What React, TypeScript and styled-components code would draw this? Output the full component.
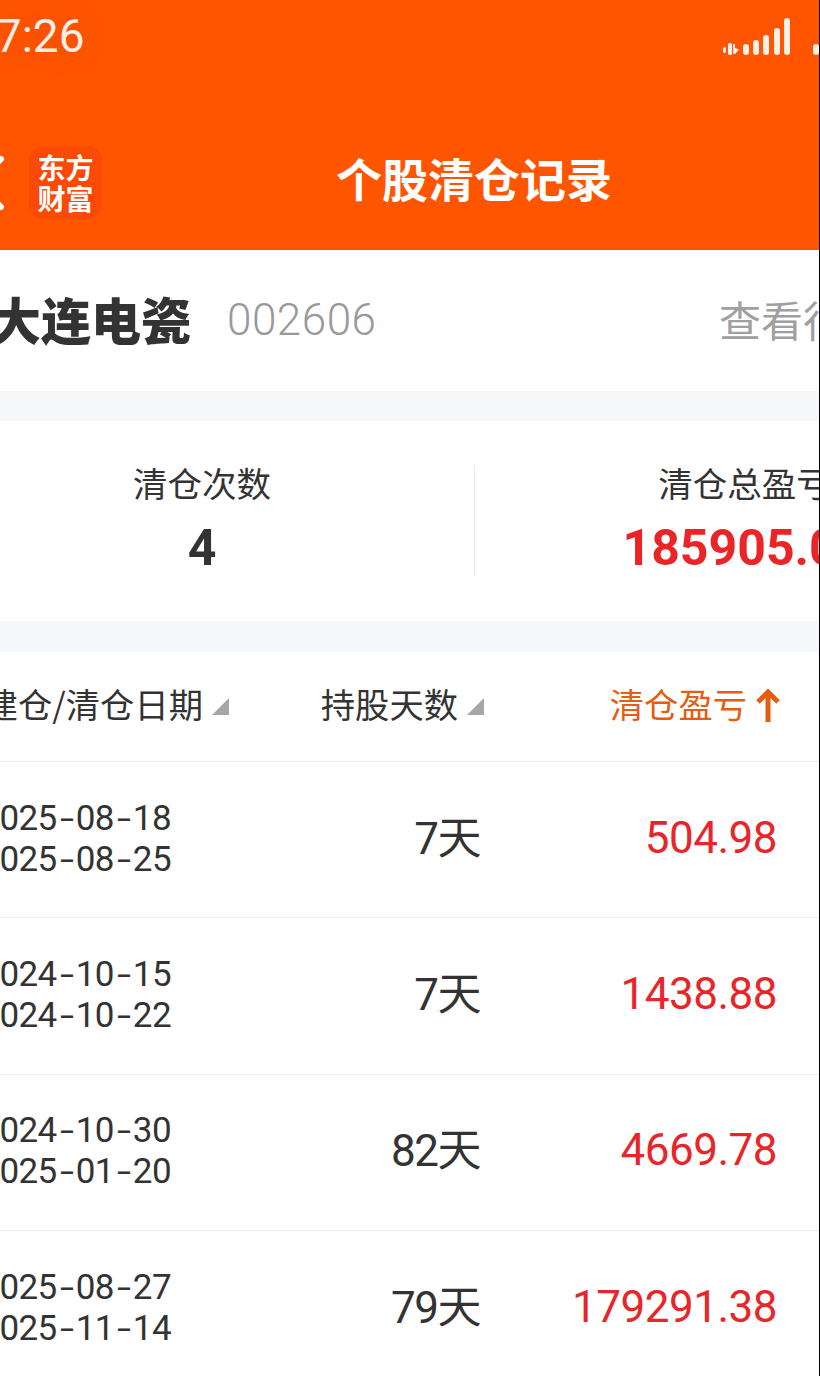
import React from "react";
import styled, { createGlobalStyle } from "styled-components";

const Global = createGlobalStyle`
  html, body { margin: 0; padding: 0; background: #fff; }
  body { font-family: Roboto, "Noto Sans CJK SC", sans-serif; }
`;
const Screen = styled.div`
  width: 819px; height: 1376px; overflow: hidden; background: #fff;
  border-right: 1px solid #000;
`;
const Page = styled.div`
  width: 1100px; margin-left: -30px;
`;
const Header = styled.header`
  height: 250px; box-sizing: border-box; background: #ff5500; display: flex; flex-direction: column;
`;
const StatusBar = styled.div`
  height: 146px; display: flex; justify-content: space-between; color: #ffeee4;
`;
const Clock = styled.div`
  font: 400 46px/48px Roboto, sans-serif; padding: 12px 0 0 0; text-shadow: 0 0 26px rgba(190, 70, 0, 0.45);
`;
const StatusIcons = styled.div`
  width: 350px; padding-top: 18px;
`;
const NavBar = styled.div`
  display: flex; align-items: flex-start; height: 104px;
`;
const Back = styled.svg`
  width: 50px; height: 72px; flex: none;
`;
const Logo = styled.div`
  width: 73px; height: 73px; flex: none; margin-left: 9px; border-radius: 14px; background: #fa4a05;
  color: #fff; font: 700 28px/31px "Noto Sans CJK SC", sans-serif; text-align: center;
  display: flex; align-items: center; justify-content: center;
`;
const NavTitle = styled.div`
  margin-left: 234px; color: #fff; font: 700 46px/62px "Noto Sans CJK SC", sans-serif; white-space: nowrap;
`;
const NameRow = styled.section`
  height: 141px; display: flex; align-items: center;
`;
const StockName = styled.div`
  margin: 0 0 6px 21px; font: 900 50px/64px "Noto Sans CJK SC", sans-serif; color: #333; width: 199px; white-space: nowrap;
`;
const StockCode = styled.div`
  margin: 0 0 2px 37px; font: 300 44px/64px Roboto, sans-serif; letter-spacing: 0.5px; color: #999; width: 492px;
`;
const More = styled.div`
  margin-bottom: 4px; font: 400 42px/64px "Noto Sans CJK SC", sans-serif; color: #a0a0a0; white-space: nowrap;
`;
const Gap = styled.div<{ $h: number }>`
  height: ${(p) => p.$h}px; background: #f6f7f9;
`;
const Stats = styled.section`
  height: 200px; display: grid; grid-template-columns: 504px 540px; align-items: center;
`;
const Stat = styled.div<{ $divider?: boolean }>`
  height: 112px; box-sizing: border-box; display: flex; flex-direction: column; align-items: center;
  ${(p) => (p.$divider ? "border-left: 1px solid #ececec;" : "padding-right: 40px;")}
`;
const StatLabel = styled.div`
  font: 400 34.5px/34px "Noto Sans CJK SC", sans-serif; color: #333; margin-bottom: 20px;
`;
const StatValue = styled.div<{ $red?: boolean }>`
  font: 700 50px/58px Roboto, sans-serif; color: ${(p) => (p.$red ? "#ea2427" : "#333")};
`;
const TableRow = styled.div<{ $head?: boolean }>`
  display: grid; grid-template-columns: 515px 292px; box-sizing: border-box;
  height: ${(p) => (p.$head ? 110 : 156.3)}px; padding-bottom: ${(p) => (p.$head ? 8 : 0)}px;
  border-bottom: 1px solid #ececec; align-items: center;
`;
const HeadLeft = styled.div`
  display: flex; align-items: center;
`;
const HeadCell = styled.div<{ $w: number }>`
  width: ${(p) => p.$w}px; box-sizing: border-box; display: flex; align-items: center; justify-content: flex-end;
  font: 400 34.3px/44px "Noto Sans CJK SC", sans-serif; color: #333; white-space: nowrap;
`;
const SortTri = styled.span`
  width: 0; height: 0; margin-left: 9px; margin-top: 8px; flex: none;
  border-style: solid; border-width: 0 0 17px 17px; border-color: transparent transparent #a6a6a6 transparent;
`;
const ActiveHead = styled.div`
  display: flex; align-items: center; justify-content: flex-end; margin-right: -4px;
  font: 400 34.3px/44px "Noto Sans CJK SC", sans-serif; color: #e45d10;
`;
const Arrow = styled.svg`
  width: 26px; height: 34px; margin-left: 8px; margin-top: 4px; flex: none;
`;
const LeftCells = styled.div`
  display: flex; align-items: center;
`;
const Dates = styled.div`
  width: 201px; margin-bottom: 2px; text-align: right; white-space: nowrap;
  font: 400 35px/41px Roboto, sans-serif; letter-spacing: -0.6px; color: #333;
`;
const Dash = styled.span`
  display: inline-block; width: 19px; text-align: center; transform: scaleX(1.45);
`;
const Days = styled.div`
  width: 309px; margin-bottom: 2px; text-align: right; letter-spacing: -1.5px;
  font: 400 44px/56px Roboto, "Noto Sans CJK SC", sans-serif; color: #333;
`;
const Profit = styled.div`
  margin-bottom: 4px; text-align: right; letter-spacing: -0.5px;
  font: 400 44px/56px Roboto, sans-serif; color: #e8262a;
`;

const rows = [
  ["2025-08-18", "2025-08-25", "7天", "504.98"],
  ["2024-10-15", "2024-10-22", "7天", "1438.88"],
  ["2024-10-30", "2025-01-20", "82天", "4669.78"],
  ["2025-08-27", "2025-11-14", "79天", "179291.38"],
];

function DateLine({ value }: { value: string }) {
  const [y, m, d] = value.split("-");
  return (
    <>
      {y}<Dash>-</Dash>{m}<Dash>-</Dash>{d}
    </>
  );
}

export default function App() {
  return (
    <Screen>
      <Global />
      <Page>
        <Header>
          <StatusBar>
            <Clock>17:26</Clock>
            <StatusIcons>
              <svg width="100" height="44" viewBox="0 0 100 44" fill="#ffeee4">
                <rect x="3" y="29" width="3" height="6" rx="1.5" />
                <rect x="8" y="25" width="4" height="12" rx="1.5" />
                <path d="M13 26h2v4l4 1.5-4 4.5h-2z" />
                <rect x="23" y="26" width="6" height="11" rx="3" />
                <rect x="33" y="22" width="6" height="15" rx="3" />
                <rect x="43" y="17" width="6" height="20" rx="3" />
                <rect x="54" y="10" width="6" height="27" rx="3" />
                <rect x="64" y="0" width="6" height="37" rx="3" />
                <rect x="93" y="26" width="6" height="11" rx="3" />
              </svg>
            </StatusIcons>
          </StatusBar>
          <NavBar>
            <Back viewBox="0 0 50 72">
              <path d="M31 13L7 37l24 24" fill="none" stroke="#fff" strokeWidth="6" strokeLinecap="round" />
            </Back>
            <Logo>东方<br />财富</Logo>
            <NavTitle>个股清仓记录</NavTitle>
          </NavBar>
        </Header>
        <NameRow>
          <StockName>大连电瓷</StockName>
          <StockCode>002606</StockCode>
          <More>查看行情</More>
        </NameRow>
        <Gap $h={30} />
        <Stats>
          <Stat>
            <StatLabel>清仓次数</StatLabel>
            <StatValue>4</StatValue>
          </Stat>
          <Stat $divider>
            <StatLabel>清仓总盈亏</StatLabel>
            <StatValue $red>185905.00</StatValue>
          </Stat>
        </Stats>
        <Gap $h={31} />
        <TableRow $head>
          <HeadLeft>
            <HeadCell $w={259}>建仓/清仓日期<SortTri /></HeadCell>
            <HeadCell $w={255}>持股天数<SortTri /></HeadCell>
          </HeadLeft>
          <ActiveHead>
            清仓盈亏
            <Arrow viewBox="0 0 26 34">
              <path d="M13 34V4M3 14L13 4l10 10" fill="none" stroke="#e45d10" strokeWidth="5" />
            </Arrow>
          </ActiveHead>
        </TableRow>
        {rows.map((r) => (
          <TableRow key={r[0]}>
            <LeftCells>
              <Dates><DateLine value={r[0]} /><br /><DateLine value={r[1]} /></Dates>
              <Days>{r[2]}</Days>
            </LeftCells>
            <Profit>{r[3]}</Profit>
          </TableRow>
        ))}
      </Page>
    </Screen>
  );
}
